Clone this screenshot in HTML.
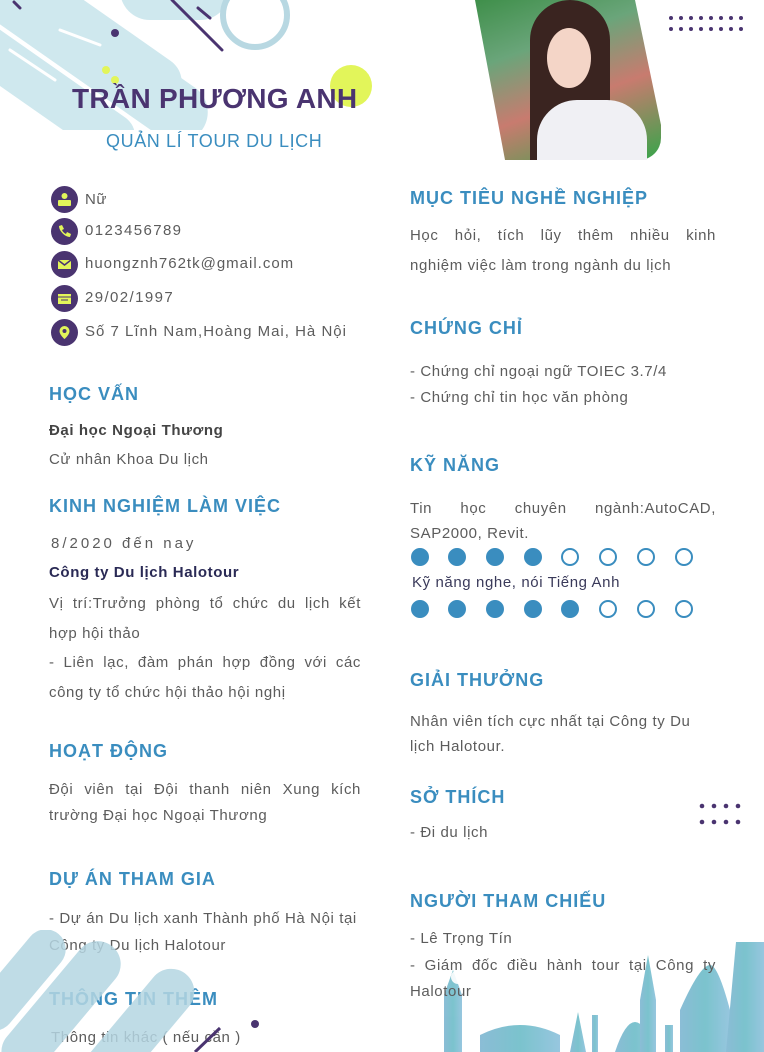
<!DOCTYPE html>
<html><head><meta charset="utf-8"><style>
*{margin:0;padding:0;box-sizing:border-box}
body{width:764px;height:1052px;background:#fff;position:relative;overflow:hidden;font-family:"Liberation Sans","DejaVu Sans",sans-serif;color:#5a5a5a}
.a{position:absolute;white-space:nowrap}
.h{position:absolute;font-weight:bold;font-size:18px;color:#3a8dbf;letter-spacing:1px;white-space:nowrap}
.t{position:absolute;font-size:15px;letter-spacing:.6px;color:#5c5c5c}
.j{text-align:justify;text-align-last:left}
.jl{text-align:justify;text-align-last:justify;white-space:nowrap}
.ic{position:absolute;left:51px;width:27px;height:27px;border-radius:50%;background:#4a3470}
.ic svg{position:absolute;left:6px;top:6px}
.dot{position:absolute;width:18px;height:18px;border-radius:50%;border:2px solid #3a8dbf}
.f{background:#3a8dbf}
</style></head><body>
<svg class="a" style="left:0;top:0" width="400" height="130">
 <g fill="#cfe8ee">
  <rect x="-60" y="-40" width="300" height="60" rx="30" transform="rotate(35 0 0)"/>
  <rect x="30" y="-10" width="170" height="52" rx="26" transform="rotate(35 60 20)"/>
  <rect x="-40" y="60" width="200" height="46" rx="23" transform="rotate(35 40 70)"/>
  <rect x="120" y="-40" width="110" height="60" rx="30"/>
 </g>
 <g stroke="#fff" stroke-width="3" stroke-linecap="round"><line x1="10" y1="50" x2="55" y2="80"/><line x1="60" y1="30" x2="100" y2="45"/></g>
 <circle cx="255" cy="15" r="32" fill="none" stroke="#b8d8e2" stroke-width="6"/>
 <g stroke="#4a3470" stroke-width="3" stroke-linecap="round"><line x1="172" y1="0" x2="222" y2="50"/><line x1="198" y1="8" x2="210" y2="18"/><line x1="14" y1="2" x2="20" y2="8"/></g>
 <circle cx="115" cy="33" r="4" fill="#4a3470"/>
 <circle cx="106" cy="70" r="4" fill="#e2f55a"/><circle cx="115" cy="80" r="4" fill="#e2f55a"/>
 <circle cx="351" cy="86" r="21" fill="#e2f55a"/>
</svg>
<div class="a" style="left:72px;top:83px;font-size:28px;font-weight:bold;color:#4a3470;letter-spacing:0.3px">TRẦN PHƯƠNG ANH</div>
<div class="a" style="left:106px;top:131px;font-size:18px;color:#3a8dbf;letter-spacing:0.6px">QUẢN LÍ TOUR DU LỊCH</div>
<div class="a" style="left:475px;top:0;width:186px;height:160px;clip-path:polygon(0 0,160px 0,186px 125px,186px 160px,30px 160px);border-radius:0 0 22px 22px;background:linear-gradient(160deg,#3f8f4a 0%,#6aa57a 30%,#c87b6f 60%,#36a54a 100%)">
 <div style="position:absolute;left:55px;top:0;width:80px;height:160px;background:#3a2420;border-radius:40px 40px 0 0"></div>
 <div style="position:absolute;left:72px;top:28px;width:44px;height:60px;background:#f4d5c7;border-radius:50%"></div>
 <div style="position:absolute;left:62px;top:100px;width:110px;height:60px;background:#f0f0f4;border-radius:40px 40px 0 0"></div>
</div>
<svg class="a" style="left:668px;top:15px" width="80" height="18"><g fill="#4a3470">
<circle cx="3" cy="3" r="2"/><circle cx="13" cy="3" r="2"/><circle cx="23" cy="3" r="2"/><circle cx="33" cy="3" r="2"/><circle cx="43" cy="3" r="2"/><circle cx="53" cy="3" r="2"/><circle cx="63" cy="3" r="2"/><circle cx="73" cy="3" r="2"/>
<circle cx="3" cy="14" r="2"/><circle cx="13" cy="14" r="2"/><circle cx="23" cy="14" r="2"/><circle cx="33" cy="14" r="2"/><circle cx="43" cy="14" r="2"/><circle cx="53" cy="14" r="2"/><circle cx="63" cy="14" r="2"/><circle cx="73" cy="14" r="2"/></g></svg>
<svg class="a" style="left:699px;top:803px" width="50" height="25"><g fill="#4a3470">
<circle cx="3" cy="3" r="2.3"/><circle cx="15" cy="3" r="2.3"/><circle cx="27" cy="3" r="2.3"/><circle cx="39" cy="3" r="2.3"/>
<circle cx="3" cy="19" r="2.3"/><circle cx="15" cy="19" r="2.3"/><circle cx="27" cy="19" r="2.3"/><circle cx="39" cy="19" r="2.3"/></g></svg>

<div class="ic" style="top:186px"><svg width="15" height="15"><circle cx="7.5" cy="4" r="3" fill="#e2f55a"/><rect x="1" y="8" width="13" height="6" rx="1" fill="#e2f55a"/></svg></div>
<div class="ic" style="top:218px"><svg width="15" height="15"><path d="M2 2l3-1 2 4-2 1c1 2 2 3 4 4l1-2 4 2-1 3C8 13 2 7 2 2z" fill="#e2f55a"/></svg></div>
<div class="ic" style="top:251px"><svg width="15" height="15"><rect x="1" y="3" width="13" height="9" fill="#e2f55a"/><path d="M1 3l6.5 5L14 3" stroke="#4a3470" stroke-width="1.5" fill="none"/></svg></div>
<div class="ic" style="top:285px"><svg width="15" height="15"><rect x="1" y="3" width="13" height="10" fill="#e2f55a"/><path d="M1 6h13M4 9h7" stroke="#4a3470"/></svg></div>
<div class="ic" style="top:319px"><svg width="15" height="15"><path d="M7.5 1a5 5 0 0 1 5 5c0 4-5 8-5 8s-5-4-5-8a5 5 0 0 1 5-5z" fill="#e2f55a"/><circle cx="7.5" cy="6" r="2" fill="#4a3470"/></svg></div>
<div class="t a" style="left:85px;top:191px">Nữ</div>
<div class="t a" style="left:85px;top:222px;letter-spacing:1.4px">0123456789</div>
<div class="t a" style="left:85px;top:255px;letter-spacing:1px">huongznh762tk@gmail.com</div>
<div class="t a" style="left:85px;top:289px;letter-spacing:1.4px">29/02/1997</div>
<div class="t a" style="left:85px;top:323px;letter-spacing:1px">Số 7 Lĩnh Nam,Hoàng Mai, Hà Nội</div>

<div class="h" style="left:49px;top:384px">HỌC VẤN</div>
<div class="t a" style="left:49px;top:422px;font-weight:bold;color:#444">Đại học Ngoại Thương</div>
<div class="t a" style="left:49px;top:451px">Cử nhân Khoa Du lịch</div>
<div class="h" style="left:49px;top:496px">KINH NGHIỆM LÀM VIỆC</div>
<div class="t a" style="left:51px;top:535px;letter-spacing:3px">8/2020 đến nay</div>
<div class="t a" style="left:49px;top:564px;font-weight:bold;color:#2a2a55">Công ty Du lịch Halotour</div>
<div class="t j" style="left:49px;top:589px;width:312px;line-height:29.5px">Vị trí:Trưởng phòng tổ chức du lịch kết hợp hội thảo<br>- Liên lạc, đàm phán hợp đồng với các công ty tổ chức hội thảo hội nghị</div>
<div class="h" style="left:49px;top:741px">HOẠT ĐỘNG</div>
<div class="t j" style="left:49px;top:777px;width:312px;line-height:26px">Đội viên tại Đội thanh niên Xung kích trường Đại học Ngoại Thương</div>
<div class="h" style="left:49px;top:869px">DỰ ÁN THAM GIA</div>
<div class="t a" style="left:49px;top:905px;line-height:27px">- Dự án Du lịch xanh Thành phố Hà Nội tại<br>Công ty Du lịch Halotour</div>
<div class="h" style="left:49px;top:989px">THÔNG TIN THÊM</div>
<div class="t a" style="left:51px;top:1029px">Thông tin khác ( nếu cần )</div>

<div class="h" style="left:410px;top:188px">MỤC TIÊU NGHỀ NGHIỆP</div>
<div class="t jl" style="left:410px;top:227px;width:306px">Học hỏi, tích lũy thêm nhiều kinh</div>
<div class="t a" style="left:410px;top:257px">nghiệm việc làm trong ngành du lịch</div>
<div class="h" style="left:410px;top:318px">CHỨNG CHỈ</div>
<div class="t a" style="left:410px;top:359px;line-height:26px">- Chứng chỉ ngoại ngữ TOIEC 3.7/4<br>- Chứng chỉ tin học văn phòng</div>
<div class="h" style="left:410px;top:455px">KỸ NĂNG</div>
<div class="t j" style="left:410px;top:496px;width:306px;line-height:25px">Tin học chuyên ngành:AutoCAD, SAP2000, Revit.</div>
<div class="dot f" style="left:411px;top:548px"></div><div class="dot f" style="left:448px;top:548px"></div><div class="dot f" style="left:486px;top:548px"></div><div class="dot f" style="left:524px;top:548px"></div><div class="dot" style="left:561px;top:548px"></div><div class="dot" style="left:599px;top:548px"></div><div class="dot" style="left:637px;top:548px"></div><div class="dot" style="left:675px;top:548px"></div>
<div class="t a" style="left:412px;top:574px;color:#3a3a5a">Kỹ năng nghe, nói Tiếng Anh</div>
<div class="dot f" style="left:411px;top:600px"></div><div class="dot f" style="left:448px;top:600px"></div><div class="dot f" style="left:486px;top:600px"></div><div class="dot f" style="left:524px;top:600px"></div><div class="dot f" style="left:561px;top:600px"></div><div class="dot" style="left:599px;top:600px"></div><div class="dot" style="left:637px;top:600px"></div><div class="dot" style="left:675px;top:600px"></div>
<div class="h" style="left:410px;top:670px">GIẢI THƯỞNG</div>
<div class="t a" style="left:410px;top:709px;line-height:25px">Nhân viên tích cực nhất tại Công ty Du<br>lịch Halotour.</div>
<div class="h" style="left:410px;top:787px">SỞ THÍCH</div>
<div class="t a" style="left:410px;top:824px">- Đi du lịch</div>

<svg class="a" style="left:0;top:930px" width="270" height="122">
 <g fill="#b5d6e2" opacity=".85">
  <rect x="-40" y="30" width="120" height="40" rx="20" transform="rotate(-50 20 50)"/>
  <rect x="-10" y="60" width="160" height="46" rx="23" transform="rotate(-50 60 90)"/>
  <rect x="60" y="80" width="160" height="46" rx="23" transform="rotate(-50 140 110)"/>
 </g>
 <line x1="195" y1="122" x2="220" y2="98" stroke="#4a3470" stroke-width="3"/>
 <circle cx="255" cy="94" r="4" fill="#4a3470"/>
</svg>
<svg class="a" style="left:440px;top:940px" width="324" height="112">
 <defs><linearGradient id="g" x1="0" x2="1"><stop offset="0" stop-color="#7fb6d2"/><stop offset=".5" stop-color="#6dbdc8"/><stop offset="1" stop-color="#8cc0dc"/></linearGradient></defs>
 <g fill="url(#g)" opacity=".9">
  <path d="M4 112V55l9-25 9 25v57z"/>
  <path d="M40 112V95q40-20 80 0v17z"/>
  <path d="M130 112l8-40 8 40z"/><path d="M152 112V75h6v37z"/>
  <path d="M175 112q10-30 20-30 10 0 20 30z"/>
  <path d="M200 112V60l8-45 8 45v52z"/>
  <path d="M225 112V85h8v27z"/>
  <path d="M240 112V70q20-45 30-45 8 0 20 45v42z"/>
  <path d="M286 112l10-110h28v110z"/>
 </g>
 <circle cx="18" cy="37" r="7" fill="#fff" opacity=".9"/>
</svg>
<div class="h" style="left:410px;top:891px">NGƯỜI THAM CHIẾU</div>
<div class="t a" style="left:410px;top:930px">- Lê Trọng Tín</div>
<div class="t jl" style="left:410px;top:957px;width:306px">- Giám đốc điều hành tour tại Công ty</div>
<div class="t a" style="left:410px;top:983px">Halotour</div>
</body></html>
